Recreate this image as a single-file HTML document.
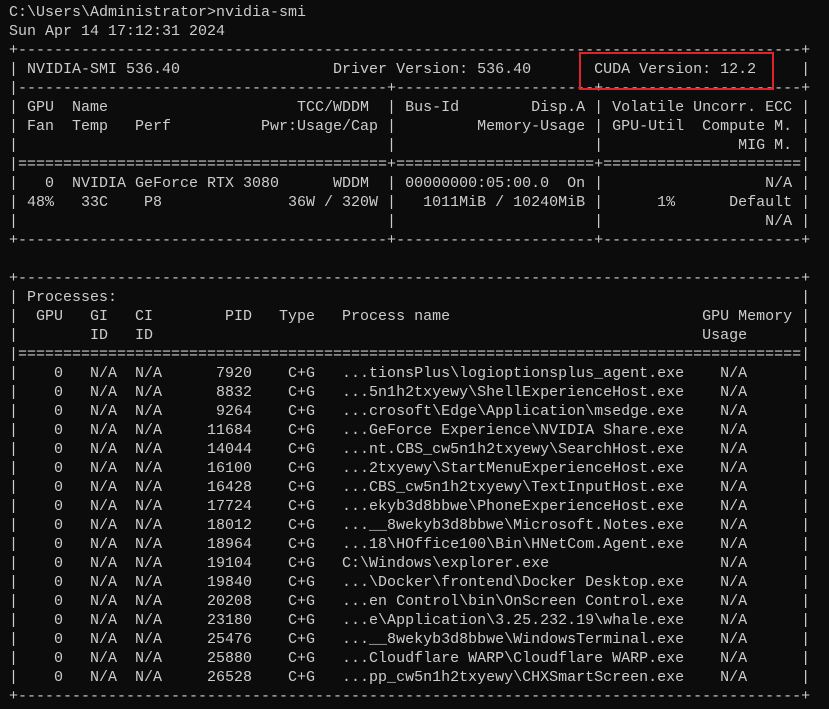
<!DOCTYPE html>
<html><head><meta charset="utf-8"><style>
html,body{margin:0;padding:0;background:#0c0c0c;width:829px;height:709px;overflow:hidden}
pre{margin:0;position:absolute;left:9px;top:3px;font-family:"Liberation Mono","DejaVu Sans Mono",monospace;font-size:15px;line-height:19px;color:#cccccc;white-space:pre}
.box{position:absolute;left:579px;top:52px;width:191px;height:34px;border:2px solid #e0232b}
</style></head><body>
<pre>C:\Users\Administrator&gt;nvidia-smi
Sun Apr 14 17:12:31 2024
+---------------------------------------------------------------------------------------+
| NVIDIA-SMI 536.40                 Driver Version: 536.40       CUDA Version: 12.2     |
|-----------------------------------------+----------------------+----------------------+
| GPU  Name                     TCC/WDDM  | Bus-Id        Disp.A | Volatile Uncorr. ECC |
| Fan  Temp   Perf          Pwr:Usage/Cap |         Memory-Usage | GPU-Util  Compute M. |
|                                         |                      |               MIG M. |
|=========================================+======================+======================|
|   0  NVIDIA GeForce RTX 3080      WDDM  | 00000000:05:00.0  On |                  N/A |
| 48%   33C    P8              36W / 320W |   1011MiB / 10240MiB |      1%      Default |
|                                         |                      |                  N/A |
+-----------------------------------------+----------------------+----------------------+

+---------------------------------------------------------------------------------------+
| Processes:                                                                            |
|  GPU   GI   CI        PID   Type   Process name                            GPU Memory |
|        ID   ID                                                             Usage      |
|=======================================================================================|
|    0   N/A  N/A      7920    C+G   ...tionsPlus\logioptionsplus_agent.exe    N/A      |
|    0   N/A  N/A      8832    C+G   ...5n1h2txyewy\ShellExperienceHost.exe    N/A      |
|    0   N/A  N/A      9264    C+G   ...crosoft\Edge\Application\msedge.exe    N/A      |
|    0   N/A  N/A     11684    C+G   ...GeForce Experience\NVIDIA Share.exe    N/A      |
|    0   N/A  N/A     14044    C+G   ...nt.CBS_cw5n1h2txyewy\SearchHost.exe    N/A      |
|    0   N/A  N/A     16100    C+G   ...2txyewy\StartMenuExperienceHost.exe    N/A      |
|    0   N/A  N/A     16428    C+G   ...CBS_cw5n1h2txyewy\TextInputHost.exe    N/A      |
|    0   N/A  N/A     17724    C+G   ...ekyb3d8bbwe\PhoneExperienceHost.exe    N/A      |
|    0   N/A  N/A     18012    C+G   ...__8wekyb3d8bbwe\Microsoft.Notes.exe    N/A      |
|    0   N/A  N/A     18964    C+G   ...18\HOffice100\Bin\HNetCom.Agent.exe    N/A      |
|    0   N/A  N/A     19104    C+G   C:\Windows\explorer.exe                   N/A      |
|    0   N/A  N/A     19840    C+G   ...\Docker\frontend\Docker Desktop.exe    N/A      |
|    0   N/A  N/A     20208    C+G   ...en Control\bin\OnScreen Control.exe    N/A      |
|    0   N/A  N/A     23180    C+G   ...e\Application\3.25.232.19\whale.exe    N/A      |
|    0   N/A  N/A     25476    C+G   ...__8wekyb3d8bbwe\WindowsTerminal.exe    N/A      |
|    0   N/A  N/A     25880    C+G   ...Cloudflare WARP\Cloudflare WARP.exe    N/A      |
|    0   N/A  N/A     26528    C+G   ...pp_cw5n1h2txyewy\CHXSmartScreen.exe    N/A      |
+---------------------------------------------------------------------------------------+</pre>
<div class="box"></div>
</body></html>
